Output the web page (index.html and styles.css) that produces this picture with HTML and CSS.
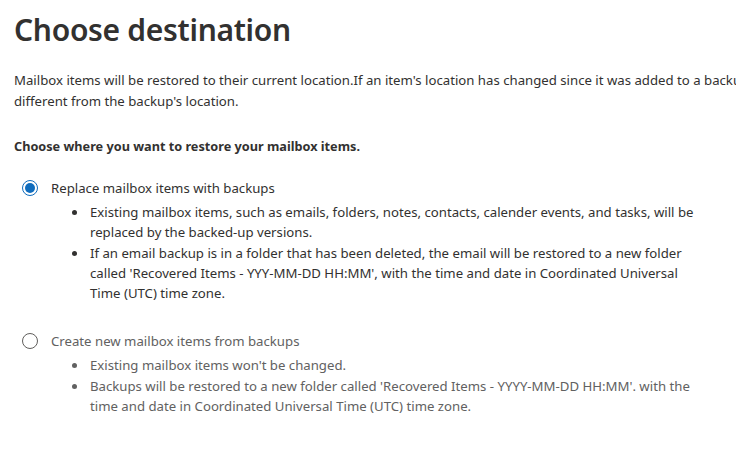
FILE: index.html
```html
<!DOCTYPE html>
<html lang="en">
<head>
    <meta charset="UTF-8">
    <meta name="viewport" content="width=device-width, initial-scale=1.0">
    <title>Choose destination</title>
    <link rel="stylesheet" href="styles.css">
</head>
<body>
    <div class="page">
        <h1 class="title">Choose destination</h1>
        <p class="intro">Mailbox items will be restored to their current location.If an item's location has changed since it was added to a backup, the items will be restored to a location different from the backup's location.</p>
        <p class="prompt">Choose where you want to restore your mailbox items.</p>

        <div class="option">
            <label class="choice">
                <span class="radio checked"></span>
                <span>Replace mailbox items with backups</span>
            </label>
            <ul class="details">
                <li>Existing mailbox items, such as emails, folders, notes, contacts, calender events, and tasks, will be replaced by the backed-up versions.</li>
                <li>If an email backup is in a folder that has been deleted, the email will be restored to a new folder called 'Recovered Items - YYY-MM-DD HH:MM', with the time and date in Coordinated Universal Time (UTC) time zone.</li>
            </ul>
        </div>

        <div class="option muted">
            <label class="choice">
                <span class="radio"></span>
                <span>Create new mailbox items from backups</span>
            </label>
            <ul class="details">
                <li>Existing mailbox items won't be changed.</li>
                <li>Backups will be restored to a new folder called 'Recovered Items - YYYY-MM-DD HH:MM'. with the time and date in Coordinated Universal Time (UTC) time zone.</li>
            </ul>
        </div>
    </div>
</body>
</html>
```

FILE: styles.css
```css
html, body {
    margin: 0;
    overflow: hidden;
}
body {
    font-family: "Noto Sans", "Open Sans", sans-serif;
    color: #323130;
    background-color: #fff;
}
.page {
    width: 1000px;
    padding: 8px 0 0 14px;
}
.title {
    margin: 0;
    font-size: 30px;
    font-weight: 600;
    line-height: 44px;
    letter-spacing: -0.3px;
}
.intro {
    margin: 18px 0 0;
    font-size: 13.2px;
    line-height: 21px;
}
.prompt {
    margin: 24px 0 0;
    font-size: 12.7px;
    font-weight: 700;
    line-height: 20px;
}
.option {
    margin-top: 22px;
    width: 695px;
}
.option + .option {
    margin-top: 28px;
}
.choice {
    display: flex;
    align-items: center;
    gap: 13px;
    padding-left: 8px;
    font-size: 13.2px;
    line-height: 20px;
}
.radio {
    width: 14px;
    height: 14px;
    border: 1px solid #605e5c;
    border-radius: 50%;
    display: flex;
    align-items: center;
    justify-content: center;
    flex-shrink: 0;
}
.radio.checked {
    border-color: #0f6cbd;
}
.radio.checked::after {
    content: "";
    width: 10px;
    height: 10px;
    border-radius: 50%;
    background-color: #0f6cbd;
}
.details {
    margin: 4px 0 0;
    padding-left: 58px;
    list-style: none;
    font-size: 13.2px;
    line-height: 20.3px;
}
.details li {
    display: flex;
}
.details li::before {
    content: "";
    flex: 0 0 5px;
    height: 5px;
    margin: 8px 13px 0 0;
    border-radius: 50%;
    background-color: currentColor;
}
.muted {
    color: #616161;
}
```
